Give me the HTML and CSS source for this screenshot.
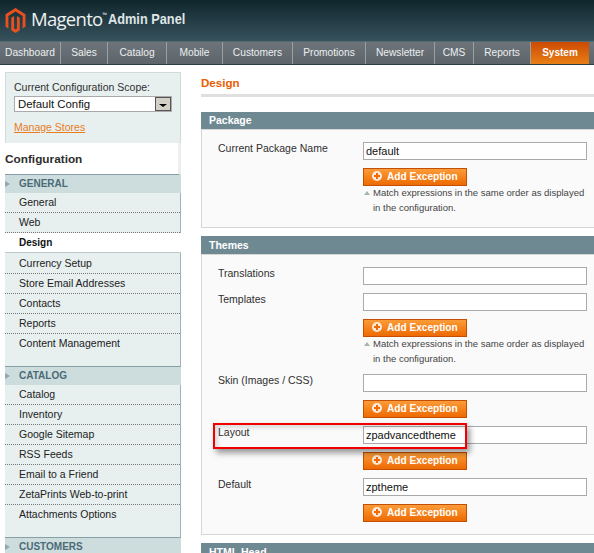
FILE: index.html
```html
<!DOCTYPE html>
<html lang="en">
<head>
  <meta charset="UTF-8" />
  <title>Magento Admin Panel</title>
  <link rel="stylesheet" href="styles.css">
</head>
<body>
  <header class="topBar">
    <svg class="logo" width="23" height="25" viewBox="0 0 24 24" preserveAspectRatio="none" aria-hidden="true">
      <path d="M12 24l-4.455-2.572v-12l2.97-1.715v12.001l1.485.902 1.485-.902V7.713l2.97 1.715v12L12 24zM22.391 6v12l-2.969 1.714V7.713L12 3.43 4.574 7.713v12.001L1.609 18V6L12 0l10.391 6z" fill="#e8501f"/>
    </svg>
    <span class="brand">Magento<sup>™</sup></span>
    <span class="brandSub">Admin Panel</span>
  </header>

  <nav class="mainNav">
    <a>Dashboard</a>
    <a>Sales</a>
    <a>Catalog</a>
    <a>Mobile</a>
    <a>Customers</a>
    <a>Promotions</a>
    <a>Newsletter</a>
    <a>CMS</a>
    <a>Reports</a>
    <a class="active">System</a>
  </nav>

  <div class="page">
    <aside class="side">
      <div class="scope">
        <label class="scopeLabel">Current Configuration Scope:</label>
        <div class="scopeSelect">
          <span>Default Config</span>
          <span class="scopeArrow"></span>
        </div>
        <a class="manage">Manage Stores</a>
      </div>

      <h3 class="sideTitle">Configuration</h3>

      <div class="groupHead">GENERAL</div>
      <ul class="items">
        <li>General</li>
        <li>Web</li>
        <li class="current">Design</li>
        <li>Currency Setup</li>
        <li>Store Email Addresses</li>
        <li>Contacts</li>
        <li>Reports</li>
        <li class="last">Content Management</li>
      </ul>

      <div class="groupHead">CATALOG</div>
      <ul class="items">
        <li>Catalog</li>
        <li>Inventory</li>
        <li>Google Sitemap</li>
        <li>RSS Feeds</li>
        <li>Email to a Friend</li>
        <li>ZetaPrints Web-to-print</li>
        <li class="last">Attachments Options</li>
      </ul>

      <div class="groupHead">CUSTOMERS</div>
    </aside>

    <main class="content">
      <h3 class="pageTitle">Design</h3>

      <section class="section">
        <div class="sectionHead headShort">Package</div>
        <div class="sectionBody">
          <div class="row">
            <label>Current Package Name</label>
            <div class="value">
              <div class="field">default</div>
              <button class="addBtn"><span class="plus"></span>Add Exception</button>
              <p class="note">Match expressions in the same order as displayed in the configuration.</p>
            </div>
          </div>
        </div>
      </section>

      <section class="section">
        <div class="sectionHead">Themes</div>
        <div class="sectionBody">
          <div class="row">
            <label>Translations</label>
            <div class="value"><div class="field"></div></div>
          </div>
          <div class="row">
            <label>Templates</label>
            <div class="value">
              <div class="field"></div>
              <button class="addBtn"><span class="plus"></span>Add Exception</button>
              <p class="note">Match expressions in the same order as displayed in the configuration.</p>
            </div>
          </div>
          <div class="row">
            <label>Skin (Images / CSS)</label>
            <div class="value">
              <div class="field"></div>
              <button class="addBtn"><span class="plus"></span>Add Exception</button>
            </div>
          </div>
          <div class="row">
            <label>Layout</label>
            <div class="value">
              <div class="field">zpadvancedtheme</div>
              <button class="addBtn"><span class="plus"></span>Add Exception</button>
            </div>
          </div>
          <div class="row">
            <label>Default</label>
            <div class="value">
              <div class="field">zptheme</div>
              <button class="addBtn"><span class="plus"></span>Add Exception</button>
            </div>
          </div>
        </div>
      </section>

      <section class="section">
        <div class="sectionHead">HTML Head</div>
      </section>
    </main>
  </div>

  <div class="highlight"></div>
</body>
</html>
```

FILE: styles.css
```css
html, body {
  margin: 0;
  height: 553px;
  overflow: hidden;
  background: white;
  font-family: "Liberation Sans", Arial, sans-serif;
  font-size: 10.5px;
  color: #2f2f2f;
}

.topBar {
  height: 41px;
  box-sizing: border-box;
  padding: 0 0 4px 4px;
  display: flex;
  align-items: center;
  background: linear-gradient(#10262d, #37525c);
  color: white;
}

.logo {
  margin: 4px 4px 0 0;
  flex: none;
}

.brand {
  font-family: "Open Sans", "Liberation Sans", sans-serif;
  font-size: 18.5px;
  letter-spacing: -0.7px;
  color: #eef1f1;
}

.brand sup {
  font-size: 6px;
  vertical-align: 9px;
}

.brandSub {
  margin-left: 2px;
  font-size: 14.5px;
  font-weight: bold;
  color: #dfe5e6;
  display: inline-block;
  transform: scaleX(0.88);
  transform-origin: left center;
}

.mainNav {
  height: 22px;
  display: grid;
  grid-template-columns: 61px 47px 59px 56px 70px 73px 69px 39px 57px 58px;
  border-top: 1px solid #566a72;
  border-bottom: 1px solid #2c3f47;
  background: linear-gradient(#6d747a, #5d656b);
}

.mainNav a {
  box-sizing: border-box;
  line-height: 22px;
  font-size: 10.2px;
  text-align: center;
  color: #eceff0;
  border-right: 1px solid #9aa1a5;
}

.mainNav a.active {
  font-size: 10px;
  font-weight: bold;
  color: white;
  border-right: 0;
  background: linear-gradient(#cc4a05, #e87f14);
}

.page {
  display: flex;
  align-items: flex-start;
  padding-left: 5px;
  margin-top: 7px;
}

.side {
  width: 176px;
  flex: none;
}

.scope {
  height: 71px;
  box-sizing: border-box;
  padding: 8px 8px 0;
  background: #e7efef;
  border: 1px solid #d0dcdc;
  border-bottom: 0;
}

.scopeLabel {
  display: block;
  line-height: 13px;
}

.scopeSelect {
  margin-top: 2px;
  height: 16px;
  box-sizing: border-box;
  display: flex;
  justify-content: space-between;
  align-items: center;
  padding-left: 3px;
  font-size: 11.4px;
  line-height: 12px;
  background: white;
  border: 1px solid #aaa;
  color: #111;
}

.scopeArrow {
  width: 16px;
  height: 14px;
  background: #d4d0c8;
  border: 1px solid #555;
  box-sizing: border-box;
  position: relative;
}

.scopeArrow::after {
  content: "";
  position: absolute;
  left: 3px;
  top: 6px;
  border: 4px solid transparent;
  border-top: 3px solid black;
  border-bottom: 0;
}

.manage {
  display: block;
  margin-top: 9px;
  line-height: 13px;
  color: #e87d1e;
  text-decoration: underline;
}

.sideTitle {
  margin: 0;
  height: 32px;
  line-height: 33px;
  font-size: 11.8px;
  font-weight: bold;
  color: #2d2d2d;
  border-right: 3px solid #eeeeee;
  border-bottom: 1px solid #85a0a6;
  box-sizing: border-box;
}

.groupHead {
  height: 18px;
  line-height: 18px;
  padding-left: 14px;
  font-size: 10px;
  font-weight: bold;
  color: #4b6b78;
  background: #cddddd;
  position: relative;
}

.groupHead::before {
  content: "";
  position: absolute;
  left: 0;
  top: 6px;
  border: 3.5px solid transparent;
  border-left: 5px solid #8fa9ae;
  border-right: 0;
}

.items {
  margin: 0;
  padding: 0;
  list-style: none;
  background: #e7efef;
  border-right: 1px solid #9fb4b7;
  border-bottom: 1px solid #85a0a6;
}

.items li {
  height: 20px;
  line-height: 19px;
  box-sizing: border-box;
  padding-left: 14px;
  color: #222;
  border-bottom: 1px dotted #777;
}

.items li.current {
  background: white;
  font-size: 10px;
  font-weight: bold;
  line-height: 20px;
  color: #111;
  border-bottom: 1px solid #b9c8c8;
  margin-right: -1px;
}

.items li.current + li {
  height: 21px;
  line-height: 20px;
}

.items li.last {
  height: 32px;
  border-bottom: 0;
}

.content {
  margin-left: 20px;
  flex: 1;
  min-width: 0;
}

.pageTitle {
  margin: 0 0 15px;
  height: 22px;
  line-height: 22px;
  font-size: 11.6px;
  font-weight: bold;
  color: #eb5e00;
  border-bottom: 3px solid #dfdfdf;
}

.section {
  margin-bottom: 8px;
}

.sectionHead {
  height: 18px;
  line-height: 18px;
  padding-left: 8px;
  font-weight: bold;
  color: white;
  background: #6f8992;
}

.headShort {
  height: 17px;
  line-height: 17px;
}

.sectionBody {
  padding: 12px 0 12px 16px;
  background: #fafafa;
  border: 1px solid #d6d6d6;
  border-right: 0;
}

.row {
  display: flex;
  margin-bottom: 8px;
}

.row:last-child {
  margin-bottom: 0;
}

.row label {
  width: 145px;
  flex: none;
  line-height: 13px;
  color: #2f2f2f;
}

.value {
  width: 224px;
  flex: none;
}

.field {
  height: 18px;
  box-sizing: border-box;
  padding-left: 2px;
  line-height: 16px;
  font-size: 11px;
  color: #111;
  background: white;
  border: 1px solid #aaa;
}

.addBtn {
  display: flex;
  align-items: center;
  margin-top: 8px;
  padding: 0 0 2px 8px;
  width: 104px;
  height: 18px;
  box-sizing: border-box;
  font: bold 10.1px "Liberation Sans", Arial, sans-serif;
  color: white;
  background: linear-gradient(#fb9c38, #ee6a03);
  border: 1px solid #c44f00;
}

.plus {
  width: 10px;
  height: 10px;
  margin-right: 5px;
  border-radius: 50%;
  background: #fbe9d8;
  position: relative;
}

.plus::before {
  content: "";
  position: absolute;
  left: 2px;
  top: 4px;
  width: 6px;
  height: 2px;
  background: #ee6b05;
}

.plus::after {
  content: "";
  position: absolute;
  left: 4px;
  top: 2px;
  width: 2px;
  height: 6px;
  background: #ee6b05;
}

.note {
  margin: 0;
  padding: 0 0 0 10px;
  font-size: 9.5px;
  line-height: 14.5px;
  color: #444;
  position: relative;
}

.note::before {
  content: "";
  position: absolute;
  left: 1px;
  top: 5px;
  border: 3px solid transparent;
  border-bottom: 4px solid #a6b4b8;
  border-top: 0;
}

.highlight {
  position: absolute;
  left: 213px;
  top: 423px;
  width: 250px;
  height: 22px;
  border: 2px solid #f00000;
  box-shadow: 3px 4px 6px rgba(0, 0, 0, 0.4), inset 3px 3px 4px rgba(0, 0, 0, 0.12);
}
```
